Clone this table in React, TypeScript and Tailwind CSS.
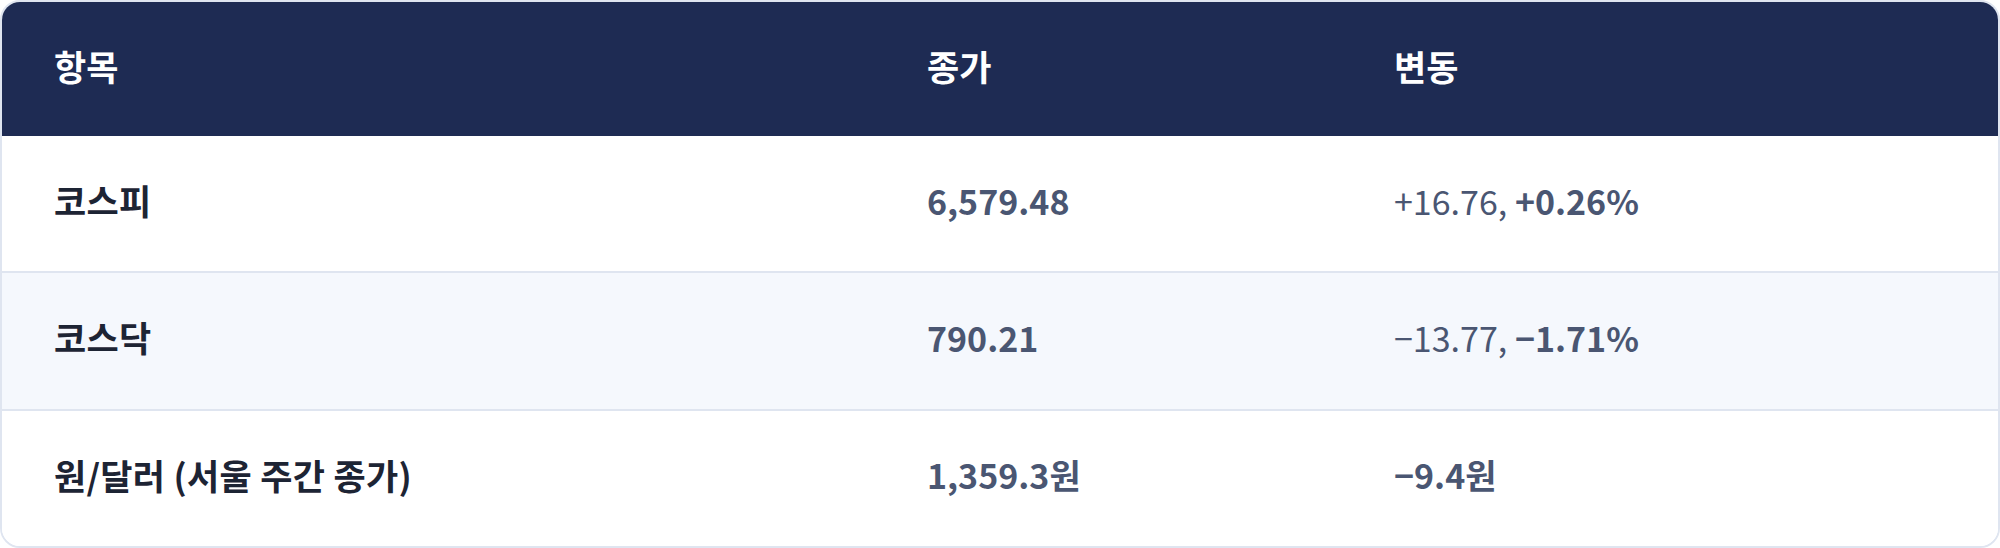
const font = { fontFamily: '"Noto Sans CJK KR", "Noto Sans", sans-serif' };

type Row = {
  name: string;
  close: string;
  change: React.ReactNode;
  striped?: boolean;
};

const rows: Row[] = [
  {
    name: "코스피",
    close: "6,579.48",
    change: (
      <>
        <span className="font-normal">+16.76, </span>
        <span className="font-bold">+0.26%</span>
      </>
    ),
  },
  {
    name: "코스닥",
    close: "790.21",
    change: (
      <>
        <span className="font-normal">−13.77, </span>
        <span className="font-bold">−1.71%</span>
      </>
    ),
    striped: true,
  },
  {
    name: "원/달러 (서울 주간 종가)",
    close: "1,359.3원",
    change: <span className="font-bold">−9.4원</span>,
  },
];

export default function App() {
  return (
    <div className="h-[548px] w-[2000px] bg-white" style={font}>
      <div className="flex h-full flex-col overflow-hidden rounded-[20px] border-2 border-[#dfe5f0]">
        {/* Header */}
        <div className="grid h-[134px] shrink-0 grid-cols-[873px_467px_1fr] items-center bg-[#1e2b53] pb-[6px] text-[35px] font-bold text-white">
          <div className="pl-[52px]">항목</div>
          <div className="pl-[52px]">종가</div>
          <div className="pl-[52px]">변동</div>
        </div>

        {rows.map((row, i) => (
          <div
            key={row.name}
            className={`grid flex-1 grid-cols-[873px_467px_1fr] items-center pb-[7px] ${
              row.striped ? "bg-[#f5f8fd]" : "bg-white"
            } ${i < rows.length - 1 ? "border-b-2 border-[#dfe5f0]" : ""}`}
          >
            <div className="pl-[52px] text-[35px] font-bold tracking-[0.3px] text-[#1d2434]">{row.name}</div>
            <div className="pl-[52px] text-[34px] font-bold text-[#4a5672]">{row.close}</div>
            <div className="pl-[52px] text-[34px] text-[#4a5672]">{row.change}</div>
          </div>
        ))}
      </div>
    </div>
  );
}
